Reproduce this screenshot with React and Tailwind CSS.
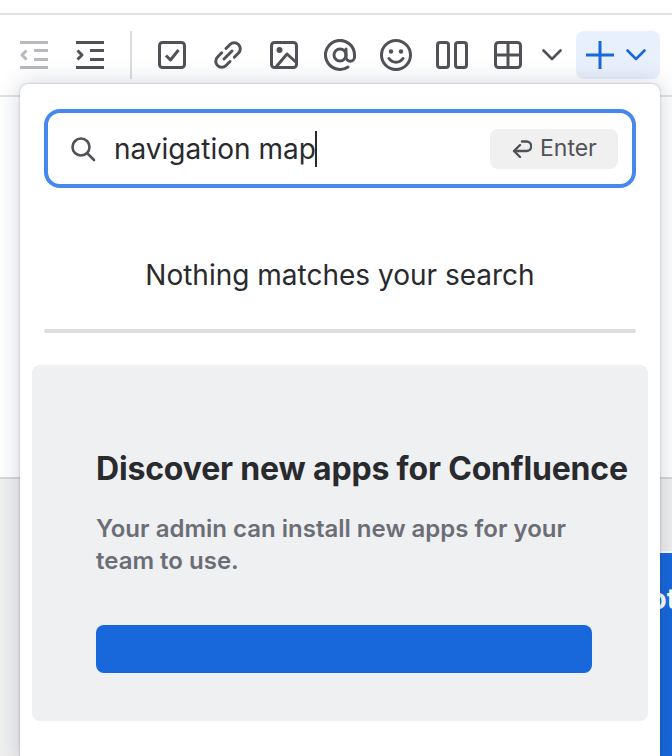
import React from "react";

const font = { fontFamily: "Inter, 'Noto Sans', sans-serif" };

function Ic({ children, w = 28, h = 28, color = "#505258", sw = 3 }) {
  return (
    <svg width={w} height={h} viewBox={`0 0 ${w} ${h}`} fill="none" stroke={color} strokeWidth={sw} strokeLinecap="butt" strokeLinejoin="round">
      {children}
    </svg>
  );
}

function Slot({ children, w = "w-[56px]" }) {
  return <div className={`${w} h-[48px] flex items-center justify-center shrink-0`}>{children}</div>;
}

function Chevron({ color = "#505258" }) {
  return (
    <svg width="20" height="12" viewBox="0 0 20 12" fill="none" stroke={color} strokeWidth="2.6" strokeLinecap="round" strokeLinejoin="round">
      <path d="M1.5 1.5 10 10l8.5-8.5" />
    </svg>
  );
}

export default function App() {
  return (
    <div className="relative w-[672px] h-[756px] overflow-hidden bg-white flex flex-col" style={font}>
      {/* page behind */}
      <div className="h-[13px] shrink-0" />
      <div className="h-[2px] bg-[#e2e2e3] shrink-0" />
      <div className="h-[82px] shrink-0 border-b-2 border-[#e2e2e3] flex items-center pl-[6px]">
        <Slot>
          <Ic color="#b7b9be">
            <path d="M0 1.500h28M0 26.500h28M14 9.500h14M14 18.500h14" />
            <path d="M6.500 9.500 2 14l4.500 4.500" />
          </Ic>
        </Slot>
        <Slot>
          <Ic>
            <path d="M0 1.500h28M0 26.500h28M14 9.500h14M14 18.500h14" />
            <path d="M1.500 9.500 6 14l-4.500 4.500" />
          </Ic>
        </Slot>
        <div className="w-[2px] h-[48px] bg-[#dcdcde] mx-[12px] shrink-0" />
        <Slot>
          <Ic>
            <rect x="1.500" y="1.500" width="25" height="25" rx="3" />
            <path d="M8 14.500l4.500 4.500 8-10" />
          </Ic>
        </Slot>
        <Slot>
          <Ic>
            <path d="M12 7.500l4-4a6 6 0 0 1 8.500 8.500l-4.200 4.200" strokeLinecap="round" />
            <path d="M16 20.500l-4 4A6 6 0 0 1 3.500 16l4.200-4.200" strokeLinecap="round" />
            <path d="M10 18l8-8" strokeLinecap="round" />
          </Ic>
        </Slot>
        <Slot>
          <Ic>
            <rect x="1.500" y="1.500" width="25" height="25" rx="3" />
            <circle cx="9.500" cy="9" r="3" fill="#505258" stroke="none" />
            <path d="M6 26l11-13 10 9" />
          </Ic>
        </Slot>
        <Slot>
          <Ic w={32} h={32}>
            <circle cx="16" cy="16" r="6" />
            <path d="M22 10v8a4 4 0 0 0 8.500 0v-2A14.500 14.500 0 1 0 24 28" strokeLinecap="round" />
          </Ic>
        </Slot>
        <Slot>
          <Ic w={32} h={32}>
            <circle cx="16" cy="16" r="14.500" />
            <circle cx="11" cy="12.500" r="2.200" fill="#505258" stroke="none" />
            <circle cx="21" cy="12.500" r="2.200" fill="#505258" stroke="none" />
            <path d="M9 19.500c3.500 5 10.500 5 14 0" strokeLinecap="round" />
          </Ic>
        </Slot>
        <Slot>
          <Ic w={32} h={28}>
            <rect x="1.500" y="1.500" width="11" height="25" rx="2.500" />
            <rect x="19.500" y="1.500" width="11" height="25" rx="2.500" />
          </Ic>
        </Slot>
        <Slot>
          <Ic>
            <rect x="1.500" y="1.500" width="25" height="25" rx="3" />
            <path d="M14 1v26M1 14h26" />
          </Ic>
        </Slot>
        <Slot w="w-[32px]">
          <Chevron />
        </Slot>
        <div className="ml-[8px] w-[84px] h-[48px] rounded-[8px] bg-[#e9f0fd] flex items-center pl-[10px] gap-[12px] shrink-0">
          <Ic color="#1868db" sw={3}>
            <path d="M0 14h28M14 0v28" />
          </Ic>
          <Chevron color="#1868db" />
        </div>
      </div>
      <div className="h-[382px] shrink-0 border-b-2 border-[#d8d8d9]" />
      <div className="flex-1 bg-[#f0f0f0] flex justify-end pt-[72px]">
        <div className="w-[120px] border-t-2 border-white bg-[#1868db] flex justify-end pt-[30px] overflow-hidden">
          <span className="text-white font-bold text-[28px] leading-[32px] whitespace-nowrap mr-[-5px] h-[32px]">ot</span>
        </div>
      </div>

      {/* popup */}
      <div className="absolute left-[20px] top-[84px] w-[640px] h-[680px] bg-white rounded-[8px] shadow-[0_0_24px_rgba(9,30,66,0.2),0_0_2px_rgba(9,30,66,0.35)]">
        <div className="mx-[24px] mt-[25px] h-[79px] rounded-[16px] border-[4px] border-[#4688ec] flex items-center pl-[22px] pr-[14px]">
          <svg width="26" height="26" viewBox="0 0 26 26" fill="none" stroke="#505258" strokeWidth="2.600" strokeLinecap="round">
            <circle cx="11" cy="11" r="8.500" />
            <path d="M17.500 17.500 24 24" />
          </svg>
          <span className="ml-[18px] text-[28px] leading-[36px] text-[#292a2e]">navigation map</span>
          <span className="w-[2px] h-[36px] bg-[#292a2e] ml-[-1px]" />
          <div className="ml-auto w-[128px] h-[40px] rounded-[8px] bg-[#f0f0f0] flex items-center pl-[22px] gap-[8px] text-[23px] text-[#505258]">
            <svg width="20" height="18" viewBox="0 0 20 18" fill="none" stroke="#505258" strokeWidth="2.400" strokeLinecap="round" strokeLinejoin="round">
              <path d="M10 1.500h4.500a4.700 4.700 0 0 1 0 9.500H2M8 5l-6 6 6 6" />
            </svg>
            <span>Enter</span>
          </div>
        </div>
        <div className="h-[141px] pt-[69px] text-center text-[28px] leading-[36px] text-[#292a2e]">Nothing matches your search</div>
        <div className="mx-[24px] h-[4px] rounded-full bg-[#dddedf]" />
        <div className="mx-[12px] mt-[32px] h-[356px] rounded-[8px] bg-[#eff0f2] pt-[84px] pl-[64px]">
          <h2 className="text-[32px] leading-[40px] font-bold tracking-[-0.17px] text-[#292a2e] whitespace-nowrap">Discover new apps for Confluence</h2>
          <p className="mt-[24px] w-[496px] text-[24px] leading-[32px] font-semibold text-[#6b6e76]">Your admin can install new apps for your team to use.</p>
          <div className="mt-[48px] w-[496px] h-[48px] rounded-[8px] bg-[#1868db]" />
        </div>
      </div>
    </div>
  );
}
